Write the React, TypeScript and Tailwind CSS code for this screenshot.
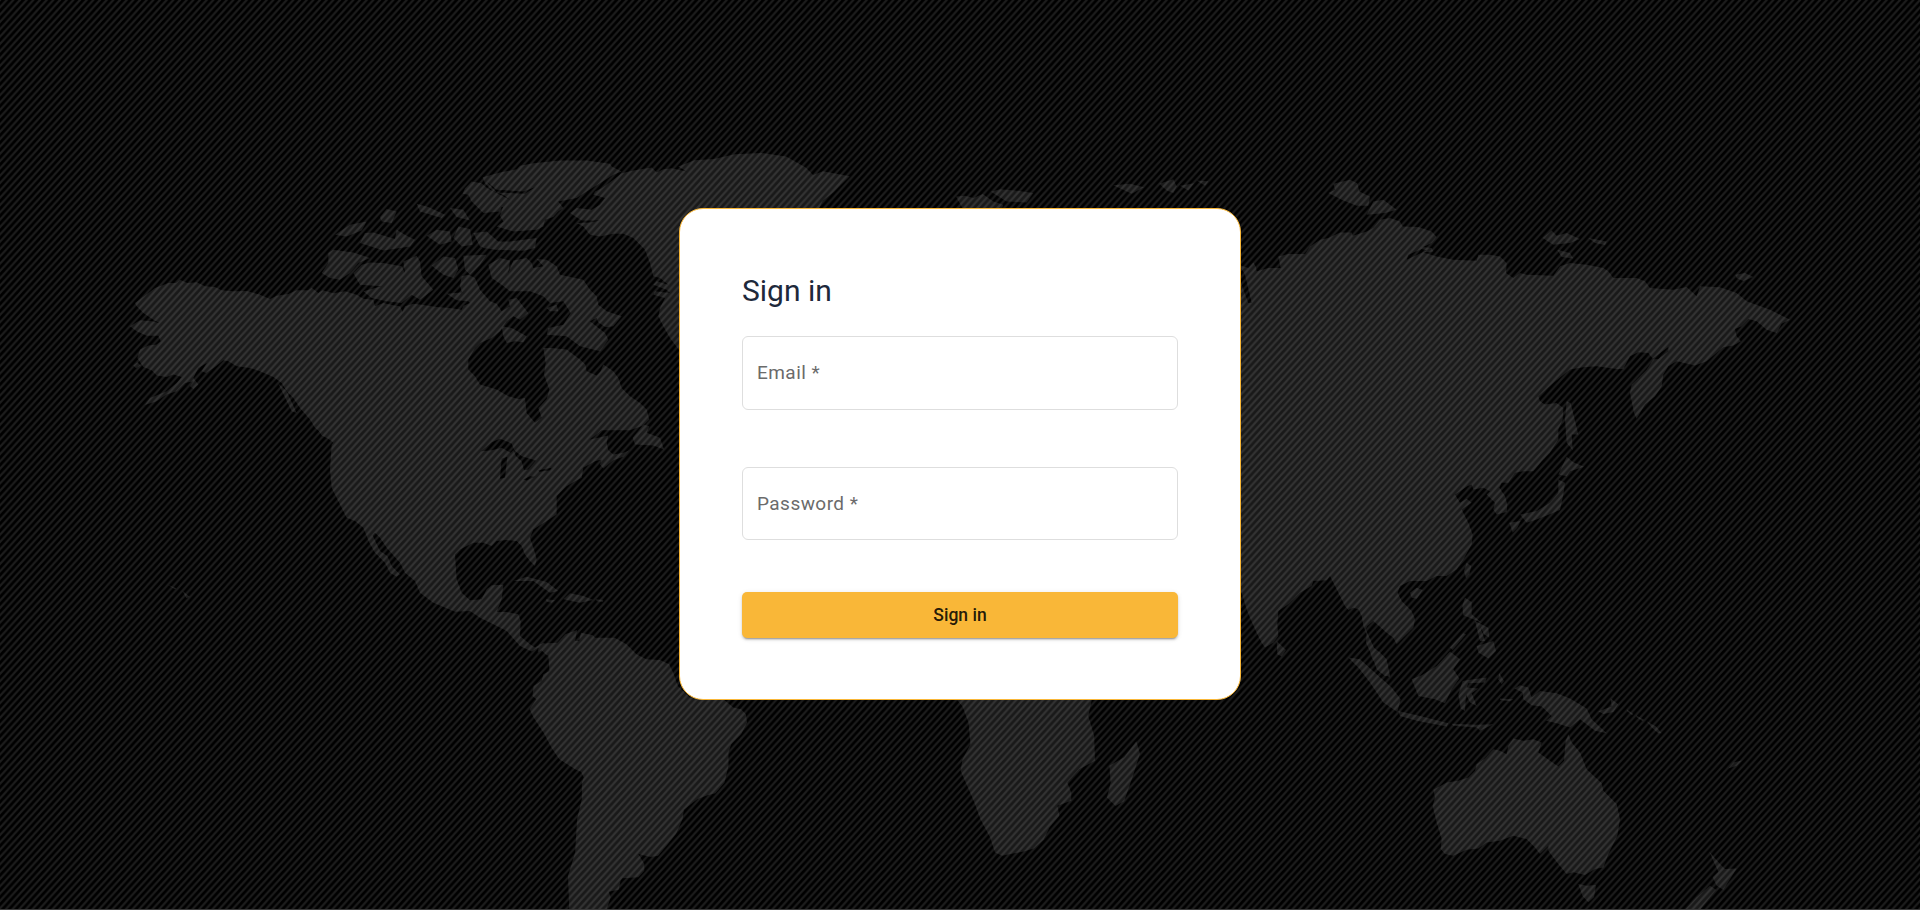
import React from "react";

type Segment = readonly [originX: number, originY: number, scaleX: number, scaleY: number, points: string];

// Each coastline is traced in tiles; a tile has its own origin and scale.
const ALASKA = [300, 390, 1, 1] as const;
const ARCTIC = [1200, 390, 1, 1] as const;
const ATLANTIC = [900, 1200, 1, 1] as const;
const SOUTH = [1500, 1860, 1.186, 1] as const;
const BARENTS = [2820, 480, 1, 1] as const;
const SIBERIA = [4020, 480, 1, 1] as const;
const ASIA = [3690, 1140, 1, 1] as const;
const OCEANIA = [4020, 1860, 1, 1] as const;
const WORLD = [0, 0, 3.6735, 3.6735] as const;

function outline(segments: Segment[]) {
  const points = segments.flatMap(([x, y, sx, sy, list]) =>
    list.split(" ").map((pair) => {
      const [px, py] = pair.split(",").map(Number);
      return `${(x + px * sx).toFixed(1)} ${(y + py * sy).toFixed(1)}`;
    }),
  );
  return `M${points.join("L")}Z`;
}

const northAmerica = outline([
  [...ALASKA, "105,520 125,505 145,490 165,475 205,460 228,460 240,450 262,460 290,458 315,470 345,472 365,482 400,485 440,484 480,495 510,508 530,498 565,493 590,482 625,482 635,474 655,490 668,482 700,491 735,485 770,495 790,507 820,510 825,530 850,520 880,527 900,530 908,547 915,530 940,522 965,525 1010,532 1050,535 1085,540 1090,528 1110,520"],
  [...ARCTIC, "190,500 180,470 185,440 205,435 225,445 240,480 270,515 290,522 305,545 330,530 325,510 350,505 385,550 360,570 340,560 320,575 300,605 275,625 240,640 225,655 205,690 205,720 225,740 240,765 290,780 325,800 355,808 375,805 380,850 405,880 425,865 415,835 440,808 448,780 432,735 437,700 430,655 455,655 500,660 540,690 556,705 560,725 590,738 602,725 610,705 640,725 655,745 665,775 690,800 720,820 740,840 748,870 730,888"],
  [...ATLANTIC, "990,92 950,92 905,92 870,120 925,108 920,130 925,152 940,165 970,160 988,152 970,172 940,182 910,207 900,195 905,180 885,185 850,205 845,235 825,245 800,260 770,290 770,345 740,365 700,390 690,415 705,460 710,480 705,500 690,485 675,465 665,440 650,425 620,422 590,425 575,440 550,430 520,430 480,450 465,465 470,540 485,580 510,603 545,600 560,570 575,558 610,556 605,600 590,638 620,638 655,645 662,665 660,710 690,735 705,745 730,730 750,745 765,770 740,768 715,745 695,757 660,740 620,695 580,675 540,655 510,635 465,637 400,610 360,580 345,545 315,520 300,490 260,445 240,415 225,400 218,408 240,455 262,470 275,500 300,525 290,532 270,520 255,490 225,460 208,430 190,385 165,365 140,355 120,315 95,265 90,210 95,135"],
  [...ALASKA, "700,940 645,895 630,870 600,835 580,805 560,785 545,760 520,742 480,725 450,715 410,710 385,695 370,692 345,712 318,730 305,725 320,700 295,715 280,745 295,765 280,778 270,770 280,755 255,760 230,785 200,795 170,815 135,826 150,805 200,785 230,760 245,742 220,735 200,742 170,738 155,722 130,712 112,685 120,660 145,648 170,645 182,635 175,618 140,618 110,605 90,590 120,572 155,575 178,580 160,570 130,550 110,530"],
]);

const southAmerica = outline([
  [...SOUTH, "100,75 120,72 145,70 165,45 195,32 190,65 200,65 205,40 235,48 240,55 290,55 320,75 345,105 370,120 405,122 428,135 438,160 450,200 480,235 560,235 590,265 610,270 622,285 625,310 610,345 585,375 578,400 578,440 568,490 545,522 525,528 500,540 465,572 462,600 445,645 425,675 400,710 380,714 350,705 365,735 365,755 350,775 310,778 305,785 300,812 275,818 280,835 270,870 175,870 172,770 180,740 190,700 195,600 207,540 207,490 212,475 205,458 190,450 150,420 130,385 110,340 85,295 75,270 92,240 82,230 85,200 105,185 110,165 125,155 122,105 112,88 95,100"],
]);

const eurasia = outline([
  [...BARENTS, "890,320 905,318 925,325 940,308 948,322 950,335 985,325 1022,325 1015,290 1045,283 1095,283 1110,260 1140,240 1165,235 1200,218 1235,218 1238,228"],
  [...SIBERIA, "80,215 100,205 120,180 150,175 180,185 188,200 235,202 275,215 290,232 275,250 250,262 275,265 280,275 250,278 290,290 340,300 410,303 415,285 450,285 480,290 500,310 498,340 520,355 540,340 560,345 640,348 660,320 690,310 740,315 790,325 805,335 820,355 890,355 915,365 930,385 1000,390 1040,382 1070,410 1080,380 1140,383 1190,400 1220,425 1290,450 1350,480 1325,492 1310,520 1280,510 1250,485 1225,478 1205,500 1185,508 1190,530 1203,545 1180,558 1150,563 1100,605 1065,618 1010,605 985,620 970,645 965,680 945,710 915,735 890,778 882,760 870,700 875,675 920,630 940,600 925,580 895,578 870,590 850,628 830,628 770,620 730,623 690,630 640,670 595,710 600,725 615,735 650,730 670,745"],
  [...ASIA, "1000,90 998,120 985,150 985,180 960,220 935,245 910,275 880,275 855,280 835,310 815,310 808,325 825,350 832,375 830,398 800,405 790,390 795,370 770,345 780,335 760,325 730,330 725,315 712,320 690,335 675,345 690,370 710,358 725,370 695,390 715,430 728,465 725,495 700,540 680,570 650,590 620,590 590,605 560,605 540,605 510,620 503,640 515,665 545,695 555,720 550,745 525,770 500,795 490,775 470,760 430,725 412,740 405,755 425,800 450,820 470,840 480,890 465,890 440,870 430,840 408,790 410,765 400,740 395,710 385,690 370,685 355,692 345,680 320,630 300,590 290,603 250,605 245,620 210,640 175,675 145,695 142,735 145,770 130,790 105,805 95,790 80,760 60,715 50,690 35,640 0,600 0,-300"],
]);

const islands = [
  // Greenland
  outline([
    [...ARCTIC, "665,130 700,122 755,113 770,128 790,118 815,115 860,125 835,110"],
    [...WORLD, "567,131 583,130 600,126 622,125 642,128 658,137 664,143 672,140 694,144 688,150 681,157 672,164 664,180 560,180"],
    [...ARCTIC, "840,665 810,625 790,590 775,560 780,535 795,505 760,495 765,485 810,490 800,480 760,465 770,455 805,465 780,445 760,440 750,400 735,360 700,325 670,312 640,312 600,320 570,315 550,290 530,280 570,278 600,272 545,272 510,250 530,235 575,240 600,225 615,205 580,195 585,185 605,175 640,150"],
  ]),
  // Arctic archipelago
  outline([[...ARCTIC, "248,142 300,128 350,118 360,108 400,100 480,92 560,92 630,102 635,110 665,125 640,135 600,160 560,185 530,205 475,215 490,235 475,245 460,262 435,270 430,290 410,300 340,305 290,290 310,275 300,258 310,230 335,215 310,195 280,185 255,160"]]),
  outline([[...ARCTIC, "188,192 195,175 215,155 245,160 262,175 300,195 340,215 330,232 305,232 300,245 250,250 215,215 205,195"]]),
  outline([[...ARCTIC, "225,315 260,315 290,335 330,335 410,325 405,355 370,363 290,360 250,355"]]),
  outline([[...ARCTIC, "265,405 300,385 330,392 325,430 340,392 380,385 395,400 400,415 430,410 410,388 440,390 470,410 480,435 550,450 570,480 590,500 595,525 620,545 665,560 640,590 600,595 590,565 570,575 615,610 625,630 600,665 540,650 500,620 440,615 445,595 490,585 512,550 490,515 450,520 430,500 390,485 330,485 305,465 275,445"]]),
  outline([[...ARCTIC, "305,590 335,595 380,620 370,638 345,635 320,640 310,620"]]),
  outline([[...ALASKA, "760,430 785,405 810,398 850,400 905,410 915,430 910,395 950,378 960,395 965,440 1000,480 960,510 935,495 905,520 860,515 815,505 790,485 845,470 780,465"]]),
  outline([[...ALASKA, "685,370 700,360 760,368 810,385 775,400 750,430 720,450 690,445 665,430 685,400"]]),
  outline([[...ALASKA, "705,315 750,285 800,275 785,302 740,320"]]),
  outline([[...ALASKA, "780,340 795,310 820,308 885,328 890,300 920,318 945,330 930,350 850,362"]]),
  outline([[...ALASKA, "840,262 860,238 890,245 875,280 845,275"]]),
  outline([[...ALASKA, "995,408 1030,380 1065,385 1075,420 1060,445 1030,435"]]),
  outline([[...ALASKA, "950,222 985,232 1035,255 1025,265 960,245"]]),
  outline([[...ALASKA, "1050,235 1090,240 1110,272 1070,262"]]),
  outline([[...ALASKA, "980,318 1010,300 1050,305 1055,335 1020,345"]]),
  outline([[...ALASKA, "1075,290 1110,298 1118,345 1085,350 1060,325"]]),
  outline([[...ALASKA, "1120,310 1160,305 1200,340 1190,360 1140,350"]]),
  outline([[...ALASKA, "1090,378 1160,375 1140,405 1110,435 1095,420"]]),
  outline([[...ALASKA, "1040,492 1090,488 1105,515 1070,512"]]),
  outline([[...ARCTIC, "440,535 470,525 475,545 450,545"]]),
  // Pacific and Caribbean
  outline([[...ALASKA, "100,708 112,698 122,708 108,716"]]),
  outline([[...ALASKA, "535,762 560,785 590,850 575,845"]]),
  outline([[...ALASKA, "645,885 670,895 710,930 700,935 665,918"]]),
  outline([[...ATLANTIC, "998,115 1030,75 1048,80 1040,100 1080,115 1092,150 1060,138 1005,135"]]),
  outline([[...ATLANTIC, "640,545 680,532 740,548 775,575 750,580 700,545"]]),
  outline([[...ATLANTIC, "790,600 810,582 850,590 880,602 840,610"]]),
  outline([[...ATLANTIC, "738,600 765,603 755,610 740,607"]]),
  outline([[...ATLANTIC, "888,600 910,602 908,608 890,606"]]),
  outline([[...WORLD, "137,478 144,481 143,482"]]),
  outline([[...WORLD, "149,483 155,488 152,489"]]),
  // Africa
  outline([[...SOUTH, "1145,225 1170,262 1185,310 1190,375 1170,420 1165,455 1180,495 1200,550 1215,600 1240,655 1252,700 1270,710 1325,697 1350,688 1375,662 1390,625 1415,590 1410,560 1445,545 1445,520 1435,490 1465,450 1505,425 1503,350 1488,290 1500,225"]]),
  outline([[...WORLD, "928,606 931,616 925,635 918,655 911,659 904,652 907,640 906,626 918,619"]]),
  // Northern seas
  outline([[...BARENTS, "48,110 75,108 100,115 128,103 160,125 190,135 185,150 70,150"]]),
  outline([[...BARENTS, "153,96 180,88 225,92 280,100 260,128 200,125"]]),
  outline([[...BARENTS, "520,76 570,72 612,82 575,102"]]),
  outline([[...BARENTS, "658,72 700,58 710,80 700,100 680,92"]]),
  outline([[...BARENTS, "720,78 762,70 745,92"]]),
  outline([[...BARENTS, "770,62 805,64 795,78"]]),
  outline([[...BARENTS, "1165,100 1185,90 1180,72 1230,60 1252,70 1258,95 1290,110 1285,138 1250,138 1205,120"]]),
  outline([[...SIBERIA, "80,165 100,125 130,120 170,150 135,160"]]),
  outline([[...SIBERIA, "608,235 635,212 650,228 680,220 720,238 690,250 640,255"]]),
  outline([[...SIBERIA, "745,235 800,245 795,256 765,250"]]),
  outline([[...SIBERIA, "652,270 690,280 700,296 665,292"]]),
  outline([[...SIBERIA, "1186,345 1215,340 1240,352 1210,364 1190,356"]]),
  // East Asia
  outline([[...ASIA, "140,785 168,812 155,832 142,825"]]),
  outline([[...ASIA, "540,640 560,625 578,632 560,658 545,655"]]),
  outline([[...ASIA, "710,550 724,560 718,585 708,597 702,575"]]),
  outline([[...ASIA, "1010,65 1022,70 1045,165 1025,165 1028,212 1010,190 1005,120"]]),
  outline([[...ASIA, "1010,232 1030,248 1062,262 1020,275 1010,290 985,285"]]),
  outline([[...ASIA, "985,300 1005,310 1000,345 990,392 965,402 920,420 890,430 870,405 920,395 960,370 985,340"]]),
  outline([[...ASIA, "838,430 872,425 862,445 848,460"]]),
  outline([[...ASIA, "705,655 725,668 725,705 755,730 700,708 697,680"]]),
  outline([[...ASIA, "735,725 775,745 778,775 762,765 750,740 765,785 750,785"]]),
  outline([[...ASIA, "740,800 790,785 798,815 775,838 745,820"]]),
  outline([[...ASIA, "660,805 700,762 708,765 668,812"]]),
  // Malay archipelago
  outline([[...OCEANIA, "25,115 60,120 110,165 155,205 182,240 172,278 130,250 90,190 55,145"]]),
  outline([[...OCEANIA, "75,25 105,92 140,125 150,175 120,158 95,115"]]),
  outline([[...OCEANIA, "175,275 240,290 325,312 320,322 230,305 180,290"]]),
  outline([[...OCEANIA, "335,314 410,317 460,315 420,335 410,325 340,320"]]),
  outline([[...OCEANIA, "215,180 245,168 290,140 330,97 360,120 340,150 358,178 335,210 315,252 285,240 235,230"]]),
  outline([[...OCEANIA, "368,185 400,180 440,175 435,190 385,192 380,205 415,208 395,222 410,260 390,250 378,225 375,275 362,268 355,225"]]),
  outline([[...OCEANIA, "478,162 492,185 485,195 475,180"]]),
  outline([[...OCEANIA, "480,238 520,240 510,246 480,242"]]),
  outline([[...OCEANIA, "523,208 540,198 565,205 575,235 600,215 650,222 690,238 740,268 755,300 800,342 765,335 720,300 690,325 650,312 618,305 635,290 605,262 575,258 550,240 548,220"]]),
  outline([[...OCEANIA, "775,276 815,262 812,238 835,255 820,278 790,284"]]),
  outline([[...OCEANIA, "860,270 880,284 876,288 862,276"]]),
  outline([[...OCEANIA, "888,288 912,302 908,306 890,294"]]),
  outline([[...OCEANIA, "920,306 948,322 965,342 955,342 935,325"]]),
  outline([[...OCEANIA, "1165,448 1180,430 1205,424 1190,440"]]),
  // Australia and New Zealand
  outline([[...OCEANIA, "280,512 320,490 355,485 385,475 405,455 410,435 435,418 460,390 480,395 500,405 505,380 520,358 550,365 580,360 605,370 595,400 630,425 655,442 672,425 677,365 685,345 695,370 720,400 740,450 785,492 790,515 830,555 840,600 832,650 805,705 790,745 765,750 735,768 700,760 680,765 655,735 640,715 625,695 625,680 600,705 585,685 560,660 520,650 480,665 440,670 415,688 380,692 340,710 315,705 302,690 305,660 290,610 278,560 285,535"]]),
  outline([[...OCEANIA, "715,795 740,800 768,798 762,835 745,850 728,832"]]),
  outline([[...OCEANIA, "1108,698 1140,735 1155,750 1190,748 1150,812 1130,800 1118,775 1135,758"]]),
  outline([[...OCEANIA, "1110,800 1128,812 1080,872 1035,872 1070,835"]]),
];

const water = [
  outline([[...ATLANTIC, "543,155 575,128 600,118 635,132 642,150 632,160 605,145 575,152"]]),
  outline([[...ATLANTIC, "605,178 622,172 615,235 600,238"]]),
  outline([[...ATLANTIC, "640,150 665,170 708,183 685,210 672,212 665,185 648,170"]]),
  outline([[...ATLANTIC, "670,240 690,230 705,232 680,243"]]),
  outline([[...ATLANTIC, "715,212 755,205 750,212 718,217"]]),
  outline([[...ARCTIC, "580,568 620,595 625,610 592,592"]]),
  outline([[...ARCTIC, "260,155 290,180 370,185 405,172 375,192 290,188"]]),
  outline([[...BARENTS, "903,325 915,345 935,430 925,430 903,370"]]),
  outline([[...SIBERIA, "200,300 205,285 245,268 260,272"]]),
  outline([[...SIBERIA, "935,600 955,585 985,562 985,575 955,598"]]),
];

function WorldMap() {
  return (
    <svg
      aria-hidden="true"
      className="absolute inset-0 h-full w-full"
      viewBox="0 0 5760 2730"
      preserveAspectRatio="none"
    >
      <defs>
        <pattern id="stripes" width="20" height="22" patternUnits="userSpaceOnUse">
          <path d="M-5 5.5L5 -5.5M-5 27.5L25 -5.5M15 27.5L25 16.5" stroke="#fff" strokeOpacity="0.115" strokeWidth="6.3" />
        </pattern>
      </defs>
      <g fill="#191919">
        <path d={northAmerica} />
        <path d={southAmerica} />
        <path d={eurasia} />
        {islands.map((d) => (
          <path key={d} d={d} />
        ))}
      </g>
      <g fill="#000">
        {water.map((d) => (
          <path key={d} d={d} />
        ))}
      </g>
      <rect width="5760" height="2730" fill="url(#stripes)" />
    </svg>
  );
}

function Field({ label, type, className }: { label: string; type: string; className: string }) {
  return (
    <label className={`relative block rounded-[6px] border border-[#dedede] ${className}`}>
      <span className="pointer-events-none absolute inset-0 flex items-center px-[14px] pt-px text-[19px] tracking-[0.45px] text-[#6b6b6b]">
        {label} *
      </span>
      <input type={type} aria-label={label} className="h-full w-full bg-transparent px-[14px] outline-none" />
    </label>
  );
}

export default function App() {
  return (
    <div className="relative flex h-[910px] w-full justify-center overflow-hidden border-b border-[#3a3a3a] bg-black pt-[208px] font-[Roboto,sans-serif]">
      <WorldMap />
      <form className="relative flex h-[492px] w-[562px] flex-col rounded-[24px] border border-[#f9b738] bg-white px-[62px] pt-[61px]">
        <h1 className="h-[66px] text-[30px] leading-[42px] text-[#1e293b]">Sign in</h1>
        <Field label="Email" type="email" className="h-[74px]" />
        <Field label="Password" type="password" className="mt-[57px] h-[73px]" />
        <button
          type="button"
          className="mt-[52px] h-[46px] rounded-[5px] bg-[#f9b738] pt-px text-[17.5px] font-medium text-black/87 shadow-[0_3px_1px_-2px_rgba(0,0,0,0.2),0_2px_2px_0_rgba(0,0,0,0.14),0_1px_5px_0_rgba(0,0,0,0.12)]"
        >
          Sign in
        </button>
      </form>
    </div>
  );
}
